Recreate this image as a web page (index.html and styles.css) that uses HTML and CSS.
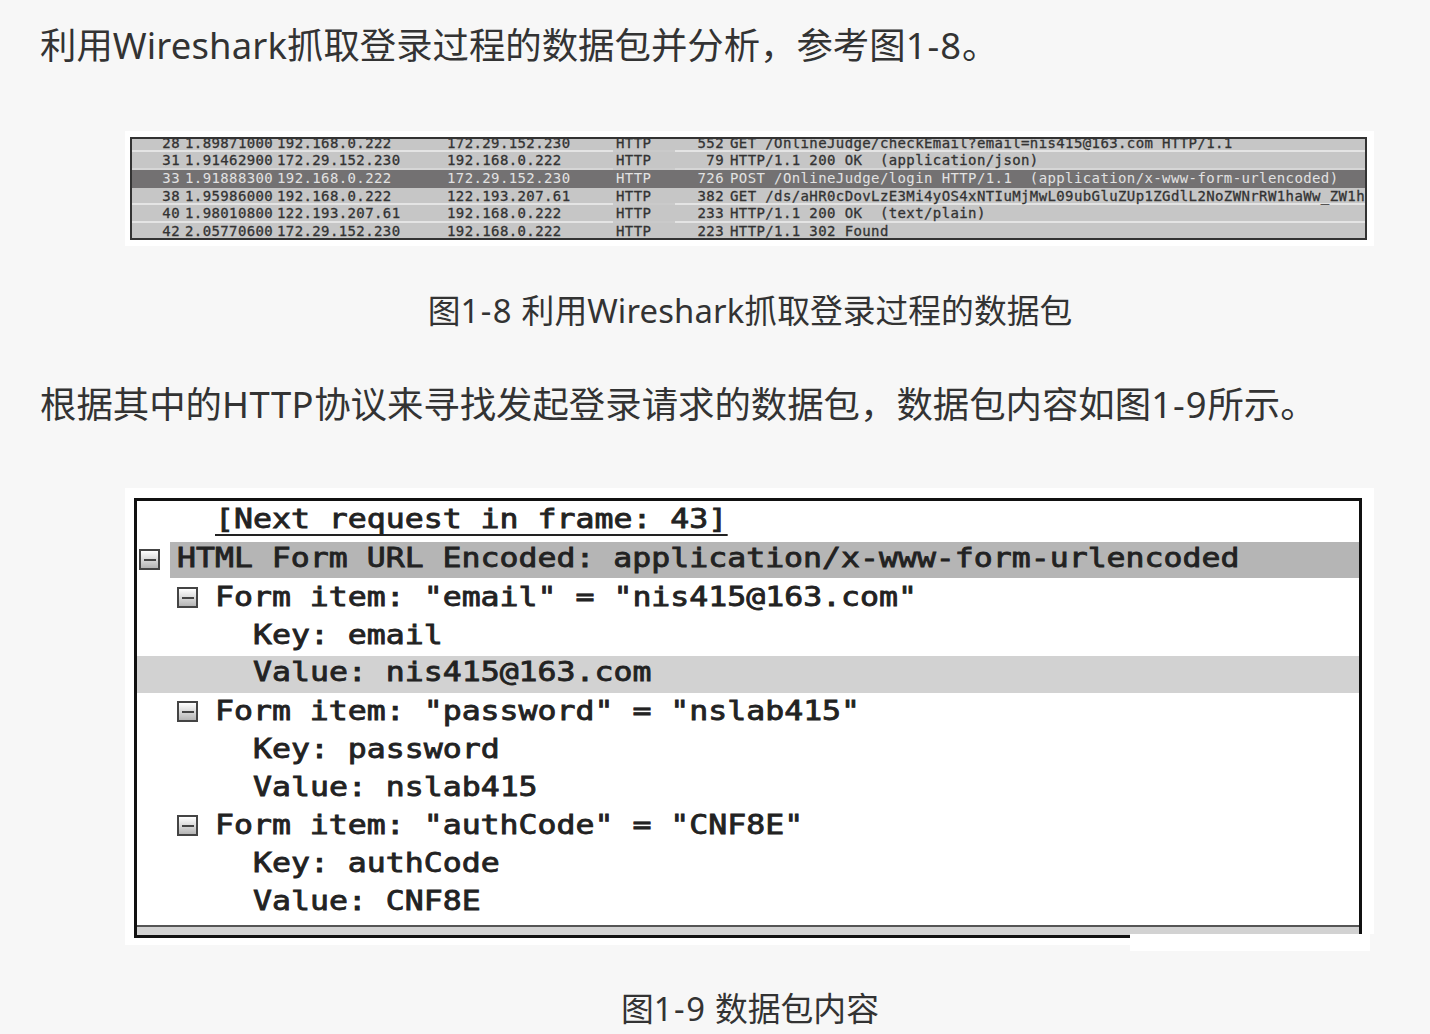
FILE: index.html
```html
<!DOCTYPE html>
<html lang="zh-CN">
<head>
  <meta charset="UTF-8">
  <meta name="viewport" content="width=device-width, initial-scale=1.0">
  <title>数据包分析</title>
  <link rel="stylesheet" href="styles.css">
</head>
<body>

  <div class="article">
    <p class="text">利用<span class="ws">Wireshark</span>抓取登录过程的数据包并分析，参考图<span class="num">1-8</span>。</p>

    <div class="figure packets">
      <div class="packet-list">
        <div class="packet"><span class="no">28</span><span class="time">1.89871000</span><span class="src">192.168.0.222</span><span class="dst">172.29.152.230</span><span class="proto">HTTP</span><span class="len">552</span><span class="info">GET /OnlineJudge/checkEmail?email=nis415@163.com HTTP/1.1</span></div>
        <div class="packet before"><span class="no">31</span><span class="time">1.91462900</span><span class="src">172.29.152.230</span><span class="dst">192.168.0.222</span><span class="proto">HTTP</span><span class="len">79</span><span class="info">HTTP/1.1 200 OK  (application/json)</span></div>
        <div class="packet selected"><span class="no">33</span><span class="time">1.91888300</span><span class="src">192.168.0.222</span><span class="dst">172.29.152.230</span><span class="proto">HTTP</span><span class="len">726</span><span class="info">POST /OnlineJudge/login HTTP/1.1  (application/x-www-form-urlencoded)</span></div>
        <div class="packet"><span class="no">38</span><span class="time">1.95986000</span><span class="src">192.168.0.222</span><span class="dst">122.193.207.61</span><span class="proto">HTTP</span><span class="len">382</span><span class="info">GET /ds/aHR0cDovLzE3Mi4yOS4xNTIuMjMwL09ubGluZUp1ZGdlL2NoZWNrRW1haWw_ZW1h</span></div>
        <div class="packet"><span class="no">40</span><span class="time">1.98010800</span><span class="src">122.193.207.61</span><span class="dst">192.168.0.222</span><span class="proto">HTTP</span><span class="len">233</span><span class="info">HTTP/1.1 200 OK  (text/plain)</span></div>
        <div class="packet"><span class="no">42</span><span class="time">2.05770600</span><span class="src">172.29.152.230</span><span class="dst">192.168.0.222</span><span class="proto">HTTP</span><span class="len">223</span><span class="info">HTTP/1.1 302 Found</span></div>
      </div>
    </div>
    <p class="caption">图<span class="num">1-8</span> 利用<span class="ws">Wireshark</span>抓取登录过程的数据包</p>

    <p class="text second">根据其中的<span class="http">HTTP</span>协议来寻找发起登录请求的数据包，数据包内容如图<span class="num">1-9</span>所示。</p>

    <div class="figure details">
      <div class="tree">
        <div class="row level1"><span class="mono link">[Next request in frame: 43]</span></div>
        <div class="row level0"><i class="toggle"></i><div class="head"><span class="mono">HTML Form URL Encoded: application/x-www-form-urlencoded</span></div></div>
        <div class="row level1"><i class="toggle"></i><span class="mono">Form item: "email" = "nis415@163.com"</span></div>
        <div class="row level2"><span class="mono">Key: email</span></div>
        <div class="row level2 current"><span class="mono">Value: nis415@163.com</span></div>
        <div class="row level1"><i class="toggle"></i><span class="mono">Form item: "password" = "nslab415"</span></div>
        <div class="row level2"><span class="mono">Key: password</span></div>
        <div class="row level2"><span class="mono">Value: nslab415</span></div>
        <div class="row level1"><i class="toggle"></i><span class="mono">Form item: "authCode" = "CNF8E"</span></div>
        <div class="row level2"><span class="mono">Key: authCode</span></div>
        <div class="row level2"><span class="mono">Value: CNF8E</span></div>
        <div class="bar"></div>
      </div>
      <div class="patch"></div>
    </div>
    <p class="caption last">图<span class="num">1-9</span> 数据包内容</p>
  </div>

</body>
</html>
```

FILE: styles.css
```css
* {
  box-sizing: border-box;
}
body {
  margin: 0;
  height: 1034px;
  overflow: hidden;
  background-color: #f7f7f7;
  color: #333;
  font-family: "Noto Sans", "Noto Sans CJK SC", sans-serif;
}
.article {
  padding: 15px 0 0;
}
.text {
  margin: 0 0 0 40px;
  height: 60px;
  line-height: 60px;
  font-size: 36.4px;
  white-space: nowrap;
}
.caption {
  margin: 0;
  height: 50px;
  line-height: 50px;
  font-size: 32.8px;
  text-align: center;
  padding-left: 70px;
  white-space: nowrap;
}
.ws {
  letter-spacing: 0.15px;
}
.http {
  letter-spacing: 0.5px;
}
.num {
  letter-spacing: 1.5px;
}
.text .num {
  letter-spacing: 1px;
}
.figure {
  width: 1249px;
  margin-left: 125px;
  background-color: #fff;
}
.packets {
  height: 115px;
  margin-top: 56px;
  margin-bottom: 40px;
  padding: 6px 0 0 5px;
}
.packet-list {
  width: 1237px;
  height: 103px;
  border: 2px solid #333;
  overflow: hidden;
  display: flex;
  flex-direction: column;
  justify-content: flex-end;
  background-color: #c6c6c6;
  font-family: "DejaVu Sans Mono", monospace;
  font-size: 14px;
  letter-spacing: 0.39px;
  line-height: 16px;
  color: #333;
  -webkit-text-stroke: 0.3px;
}
.packet {
  display: flex;
  flex: none;
  height: 17.7px;
  white-space: pre;
}
.packet:last-child {
  height: 15px;
}
.packet span {
  border-bottom: 2px solid #e4e4e4;
}
.packet .no {
  width: 48px;
  text-align: right;
}
.packet .time {
  width: 97px;
  padding-left: 5px;
}
.packet .src {
  width: 170px;
}
.packet .dst {
  width: 166px;
}
.packet .proto {
  width: 62px;
  padding-left: 3px;
  border-color: #cacaca;
}
.packet .len {
  width: 49px;
  text-align: right;
}
.packet .info {
  flex: 1;
  min-width: 0;
  padding-left: 6px;
}
.packet:last-child span {
  border: none;
}
.before span {
  border-color: #d6d6d6;
}
.selected {
  background-color: #737172;
  color: #e2e2e2;
  -webkit-text-stroke: 0;
}
.packet.selected span {
  border-color: #737172;
}
.second {
  margin-top: 38px;
}
.details {
  position: relative;
  height: 457px;
  margin-top: 54px;
  margin-bottom: 39px;
  padding: 10px 0 0 9px;
}
.tree {
  width: 1228px;
  height: 440px;
  border: 3px solid #111;
  padding-top: 2px;
  overflow: hidden;
  display: flex;
  flex-direction: column;
}
.row {
  display: flex;
  align-items: center;
  flex: none;
  height: 38px;
  padding-bottom: 2px;
  color: #222;
}
.level0 {
  padding-left: 2px;
}
.level1 {
  padding-left: 40px;
}
.level2 {
  padding-left: 116px;
}
.row:first-child {
  height: 38.6px;
  padding-left: 78px;
  padding-bottom: 6px;
}
.current {
  height: 37px;
  margin-bottom: 1px;
  padding-bottom: 2px;
  background-color: #d2d2d2;
}
.head {
  flex: 1;
  height: 36px;
  margin-left: 10px;
  padding-left: 7px;
  background-color: #b5b5b5;
}
.mono {
  display: inline-block;
  font-family: "DejaVu Sans Mono", monospace;
  font-size: 26px;
  line-height: 32px;
  white-space: pre;
  transform: scaleX(1.212);
  transform-origin: left;
  -webkit-text-stroke: 0.8px #222;
}
.row > .mono {
  margin-bottom: 2px;
}
.row > .link {
  height: 33px;
  margin-bottom: 0;
  line-height: 33px;
  border-bottom: 2px solid #222;
}
.toggle {
  flex: none;
  width: 21px;
  height: 21px;
  margin-right: 17px;
  border: 2px solid #444;
  background: linear-gradient(#444, #444) center / 12px 2px no-repeat, linear-gradient(#fff, #b5b5b5);
}
.level0 .toggle {
  margin-right: 0;
}
.bar {
  flex: 1;
  margin-top: 3.4px;
  border-top: 2px solid #555;
  background-color: #d2d2d2;
}
/* covers the lower right corner of the frame */
.patch {
  position: absolute;
  left: 1005px;
  top: 446px;
  width: 244px;
  height: 17px;
  border-right: 4px solid #f7f7f7;
  background-color: #fff;
}
```
